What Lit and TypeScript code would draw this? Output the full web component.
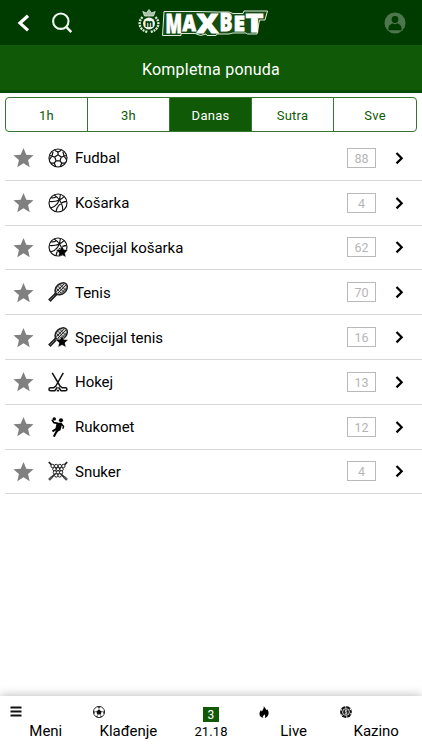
import { LitElement, html, css, svg } from "lit";
import { customElement } from "lit/decorators.js";

const star = "M12 1.200 15.200 8.800l8.300.7-6.300 5.400 1.900 8.100-7.100-4.300-7.100 4.300 1.900-8.100L.5 9.500l8.300-.7z";
const badge = svg`<path d="M14 8.300l1.800 4.100 4.500.4-3.400 3 1 4.400-3.900-2.300-3.900 2.300 1-4.400-3.400-3 4.500-.4z" fill="#000" stroke="#fff" stroke-width=".4"/>`;

const basketball = svg`<g fill="none" stroke="#111" stroke-width="1.150">
  <circle cx="10" cy="10" r="9"/>
  <path d="M1.300 8.500C7 9 12.500 7.500 16 3.600M6.200 2C10.500 4.500 15 10.500 14.800 17.500M2.600 15C8.500 13.300 12 8 12.400 1.500M8 18.700C8.500 14 12.500 8.800 18.800 8.400M3.200 4.600C5 5 7.500 4.500 8.500 3.300"/></g>`;

const racket = svg`<g fill="none" stroke="#222">
  <ellipse cx="13.200" cy="6.800" rx="6.900" ry="5" transform="rotate(-43 13.200 6.800)" stroke-width="1.500" fill="#ccc"/>
  <path d="M8.500 6.500l5 5M10 4.300l6 6M12 2.500l5.500 5.500M8.500 9.500l8-8M10 11l8.500-8.500M13 11.500l5.500-5.500" stroke-width=".9"/>
  <path d="M8 8.500 6.700 13l5-1" stroke-width="1.100"/>
  <path d="M7.900 12.100 1.300 18.700" stroke-width="3.400"/><path d="M6.500 13.500 2 18" stroke="#888" stroke-width=".7"/></g>`;

const icons: Record<string, unknown> = {
  football: svg`<g fill="none" stroke="#111" stroke-width="1.200"><circle cx="10" cy="10" r="9"/>
    <path d="M10 6.800l3.200 2.300-1.200 3.700H8L6.800 9.100zM10 6.800V4M13.200 9.100l2.900-.9M12 12.800l1.700 2.400M8 12.800l-1.700 2.400M6.800 9.100l-2.900-.9"/>
    <path d="M6.500 2.200 10 4l3.500-1.800M18.500 7.500l-2.400.7-1.200-4.500M17 15.200l-3.300 0-1.400 3.200M3 15.200h3.300l1.400 3.200M1.500 7.500l2.400.7 1.200-4.500M16.100 8.200l2.300 3.300M3.900 8.200l-2.300 3.300"/></g>`,
  basketball,
  basketballStar: svg`${basketball}${badge}`,
  racket,
  racketStar: svg`${racket}${badge}`,
  hockey: svg`<g fill="none" stroke="#111" stroke-linejoin="round"><path d="M4.200.8 12.600 15M15.300.8 7.300 15" stroke-width="1.500"/>
    <path d="M7.300 14.500 5.800 15.700H2.600c-2.200 0-2.200 3 0 3h4.200l2.600-3.500M12.600 14.500l1.500 1.200h3.200c2.200 0 2.200 3 0 3h-4.200l-2.600-3.500" stroke-width="1.500"/><path d="M8.800 18.600h2.300" stroke-width="1.700"/></g>`,
  handball: svg`<g fill="none" stroke="#000" stroke-linecap="round" stroke-linejoin="round"><circle cx="6.300" cy="1.900" r="1.700" fill="#000" stroke="none"/><circle cx="13" cy="3.300" r="2.100" fill="#000" stroke="none"/>
    <path d="M4.300 3.300 5.800 5.600 10 6.300l3 .4" stroke-width="1.700"/><path d="M9.500 7.500h3.400L11.500 12.500 8.500 12z" fill="#000" stroke-width="2.300"/>
    <path d="M13.500 7l2.100 2.500-.6 1.800" stroke-width="1.400"/><path d="M8.700 11.800 5.200 13.800M10.300 12.800 8.200 15.300 6.300 18.800" stroke-width="2.100"/></g>`,
  snooker: svg`<g fill="none" stroke="#222"><path d="M.8 1.200 18.700 18.600M19.200 1.200 1.300 18.600" stroke-width="1.700"/>
    <path d="M4.500 4h11L14 9l-2 4-2 2.500L8 13 6 9z" fill="#fff" stroke="none"/>
    ${[[4.600, 5], [8.200, 5], [11.800, 5], [15.400, 5], [6.400, 8.200], [10, 8.200], [13.600, 8.200], [6.900, 11.400], [10, 11.400], [13.100, 11.400], [8.300, 14.400], [11.700, 14.400]].map(
      ([x, y]) => svg`<circle cx=${x} cy=${y} r="1.700" stroke-width="1" fill="#fff"/>`)}
    <path d="M1 18.800l3-3M19 18.800l-3-3" stroke="#555" stroke-width="2.600"/></g>`,
};

const sports = [
  ["football", "Fudbal", 88], ["basketball", "Košarka", 4], ["basketballStar", "Specijal košarka", 62],
  ["racket", "Tenis", 70], ["racketStar", "Specijal tenis", 16], ["hockey", "Hokej", 13],
  ["handball", "Rukomet", 12], ["snooker", "Snuker", 4],
] as const;

@customElement("app-root")
export class AppRoot extends LitElement {
  static styles = css`
    :host { display: flex; flex-direction: column; height: 750px; background: #fff; color: #000; font-family: Roboto, sans-serif; overflow: hidden; }
    * { box-sizing: border-box; }
    svg { display: block; flex: none; }
    .top { height: 45px; background: #003b00; display: flex; align-items: center; padding: 0 16px 0 17px; flex: none; }
    .search { margin-left: 20px; }
    .logo { margin: 0 auto 0 65px; }
    .logo text { font-family: "Noto Sans", sans-serif; font-weight: 900; }
    .title { height: 48px; background: #0f5907; border-bottom: 3px solid #094b03; color: #fff; font-size: 16px; letter-spacing: .22px; display: flex; align-items: center; justify-content: center; padding-top: 3px; flex: none; }
    .tabs { display: grid; grid-template-columns: repeat(5, 1fr); height: 35px; margin: 4px 5px 0; border: 1px solid #36752f; border-radius: 4px; overflow: hidden; flex: none; color: #0f5907; font-size: 13px; letter-spacing: .25px; }
    .tab { display: flex; align-items: center; justify-content: center; padding-top: 1px; border-right: 1px solid #36752f; }
    .tab:last-child { border-right: 0; }
    .tab.on { background: #0f5907; color: #fff; }
    .list { flex: 1; padding: 4px 0 0 5px; }
    .row { height: 44.800px; border-bottom: 1px solid #d8d8d8; display: flex; align-items: center; padding: 0 17px 0 8px; }
    .fav { margin-right: 14px; }
    .name { margin-left: 7px; flex: 1; font-size: 15px; letter-spacing: -.03px; padding-top: 1px; }
    .count { width: 29px; height: 20px; border: 1px solid #b9b9b9; color: #b5b5b5; font-size: 12.500px; display: flex; align-items: center; justify-content: center; margin-right: 19px; padding-top: 1px; }
    .foot { height: 54px; display: grid; grid-template-columns: repeat(5, 1fr); padding-right: 9px; box-shadow: 0 -1px 9px rgba(0,0,0,.25); flex: none; }
    .item { padding: 9px 0 0 9px; }
    .item svg { height: 14px; }
    .lbl { display: block; font-size: 15px; line-height: 18px; margin-top: 3px; text-align: center; white-space: nowrap; letter-spacing: -.03px; }
    .ticket { display: flex; flex-direction: column; align-items: center; padding-top: 11px; padding-left: 9px; font-size: 13px; }
    .num { width: 16px; height: 15px; background: #0f5907; color: #fff; line-height: 17px; text-align: center; font-size: 12px; }
    .time { line-height: 18px; letter-spacing: .1px; margin-top: 1px; }
  `;

  private logo() {
    const glyphs: [string, number, number, number, number][] = [
      ["M", 27.500, 32.500, 26.500, 16.500], ["A", 44.500, 30.800, 22, 13.500], ["X", 58.500, 33, 27, 22],
      ["B", 81.500, 31, 24.500, 13], ["E", 95.500, 30.500, 21, 11.500], ["T", 107.500, 31.500, 25.500, 18],
    ];
    return html`<svg class="logo" width="132" height="45" viewBox="0 0 132 45">
      <g fill="none" stroke="#dbe8db">
        <path d="M4.500 17C-.5 22 1 30 9.500 32M17.500 17c5 5 3.500 13-5 15" stroke-width="2.400" stroke-dasharray="2 .9"/>
        <path d="M6.500 16 4.800 11.500 8.500 13l2.500-3.500 2.500 3.500 3.700-1.500L15.500 16z" fill="#a9c1a9" stroke-width=".8"/></g>
      <circle cx="11" cy="23.500" r="6" fill="#edf5ed"/>
      <text x="7" y="27" font-size="11" textLength="8" lengthAdjust="spacingAndGlyphs" fill="#003b00">m</text>
      <path d="M26 11.500H60L80 12H91L95 13.500H105L106 11H129.500L127 20H121.500L119 34H109.500L108 33H95L91 34H79L78 35.500H69L68 34 62.500 35.500 57 33.500H43V35.500H24.500z" fill="#134d13" stroke="#dce9dc" stroke-width="1" stroke-linejoin="round"/>
      ${glyphs.map(([c, x, y, s, w]) => svg`<text x=${x} y=${y} font-size=${s} textLength=${w} lengthAdjust="spacingAndGlyphs" fill="#fff" stroke="#fff" stroke-width=".8">${c}</text>`)}
    </svg>`;
  }

  render() {
    return html`
      <header class="top">
        <svg width="14" height="20" viewBox="0 0 14 20"><path d="M11 2.800 3 10.100l8 7.300" fill="none" stroke="#fff" stroke-width="3.200"/></svg>
        <svg class="search" width="22" height="22" viewBox="0 0 22 22"><g fill="none" stroke="#eef5ee" stroke-width="2.100"><circle cx="9.800" cy="9.200" r="7.700"/><path d="m15 14.700 5.300 5.500" stroke-width="2.500"/></g></svg>
        ${this.logo()}
        <svg width="22" height="22" viewBox="0 0 22 22"><circle cx="11" cy="11" r="10.500" fill="#4c774c"/><circle cx="11" cy="7.500" r="3.400" fill="#003b00"/><path d="M4.500 18.300V16c0-3 3-4.500 4.500-4.500 1.500 1 2.500 1 4 0 1.500 0 4.500 1.500 4.500 4.500v2.300z" fill="#003b00"/></svg>
      </header>
      <div class="title">Kompletna ponuda</div>
      <nav class="tabs">${["1h", "3h", "Danas", "Sutra", "Sve"].map((t) => html`<div class="tab ${t === "Danas" ? "on" : ""}">${t}</div>`)}</nav>
      <main class="list">${sports.map(([icon, name, n]) => html`
        <div class="row">
          <svg class="fav" width="21" height="21" viewBox="0 0 24 24"><path d=${star} fill="#808080"/></svg>
          <svg width="20" height="20" viewBox="0 0 20 20">${icons[icon]}</svg>
          <span class="name">${name}</span><span class="count">${n}</span>
          <svg width="10" height="14" viewBox="0 0 10 14"><path d="M1.500 2 6.700 7.200 1.500 12.400" fill="none" stroke="#000" stroke-width="2.200"/></svg>
        </div>`)}</main>
      <footer class="foot">
        <div class="item"><svg width="14" viewBox="0 0 14 14"><path d="M1.500 2.500h11M1.500 6.500h11M1.500 10.500h11" stroke="#111" stroke-width="2"/></svg><span class="lbl">Meni</span></div>
        <div class="item"><svg width="14" viewBox="0 0 14 14"><circle cx="7" cy="7" r="5.600" fill="#fff" stroke="#222" stroke-width=".9"/><path d="m7 4.400 2.700 2-1 3.100H5.300l-1-3.100zM4.800 1.700 7 3l2.200-1.300zM1.300 5.500l1.600 1.300-.8 2.600zM12.700 5.500l-1.600 1.300.8 2.600zM3.300 11.200l2-.2.700 1.600zM10.700 11.200l-2-.2-.7 1.600z" fill="#111"/><path d="M7 3v2M2.900 6.800l2-.4M11.100 6.800l-2-.4M5.300 9.500v1.500M8.700 9.500V11" stroke="#333" stroke-width=".6"/></svg><span class="lbl">Klađenje</span></div>
        <div class="ticket"><span class="num">3</span><span class="time">21.18</span></div>
        <div class="item"><svg width="14" viewBox="0 0 14 14"><path d="M6.800 1c1 2.200 2.300 2.700 2.500 4.200.5-.3.700-.8.700-1.300 1.300 1.700 1.900 3.200 1.500 5C11 11.200 9.500 12.600 7.800 13c.7-1.300.5-2.700-.6-3.800-.1 1-.8 1.500-1.400 2 0 .7.200 1.300.6 1.800C3.800 12.500 2.400 10.800 2.500 8.800c0-1.600.9-2.600 1.500-3.700l.7 1.300C6 4.800 7 3.200 6.800 1z" fill="#000"/></svg><span class="lbl">Live</span></div>
        <div class="item"><svg width="14" viewBox="0 0 14 14"><circle cx="7" cy="7" r="5.900" fill="#111"/><circle cx="7" cy="7" r="5.200" fill="none" stroke="#fff" stroke-width="1.200" stroke-dasharray="1.500 3.945" stroke-dashoffset="-1"/><circle cx="7" cy="7" r="3.400" fill="none" stroke="#fff" stroke-width=".8"/><path d="M8.300 5.700C7.500 4.900 6 5.200 6 6s2.200 1 2.200 2-1.600 1.200-2.500.3M7 4.500v5" fill="none" stroke="#fff" stroke-width=".7"/></svg><span class="lbl">Kazino</span></div>
      </footer>`;
  }
}
